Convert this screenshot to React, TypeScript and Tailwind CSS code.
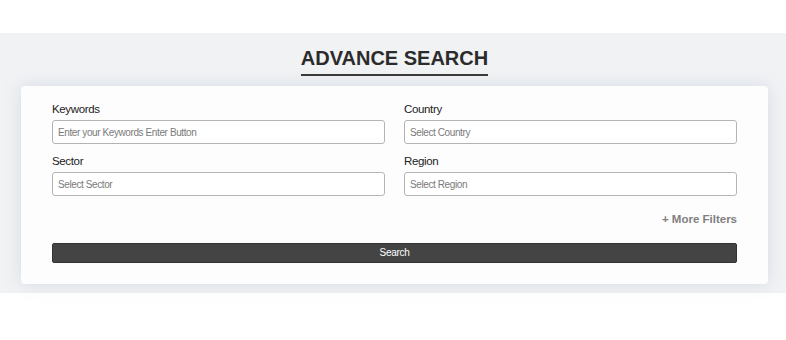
function Field({ label, placeholder }: { label: string; placeholder: string }) {
  return (
    <div>
      <label className="block text-[11.5px] leading-[14px] tracking-[-0.35px] text-[#222] mb-[4px]">
        {label}
      </label>
      <input
        type="text"
        placeholder={placeholder}
        className="block w-full h-[24px] px-[5px] rounded-[3px] border border-[#b4b4b4] bg-white text-[10px] tracking-[-0.4px] text-[#333] placeholder:text-[#7a7a7a] outline-none"
      />
    </div>
  );
}

export default function App() {
  return (
    <div className="bg-white font-['Liberation_Sans',Arial,sans-serif]">
      <div className="h-[33px]" />
      <section className="bg-[#f1f2f4] pt-[13px] pb-[9px]">
        <div className="ml-[21px] w-[747px]">
          {/* Title */}
          <div className="text-center">
            <h1 className="inline-block text-[20px] leading-[24px] font-bold text-[#2b2b2b] pb-[4px] border-b-2 border-[#3a3a3a]">
              ADVANCE SEARCH
            </h1>
          </div>

          {/* Card */}
          <div className="mt-[10px] bg-[#fdfdfd] rounded-[4px] shadow-[0_0_16px_rgba(160,178,200,0.35)] pt-[16px] pb-[21px] px-[31px]">
            <div className="grid grid-cols-2 gap-x-[19px] gap-y-[10px]">
              <Field label="Keywords" placeholder="Enter your Keywords Enter Button" />
              <Field label="Country" placeholder="Select Country" />
              <Field label="Sector" placeholder="Select Sector" />
              <Field label="Region" placeholder="Select Region" />
            </div>

            <div className="mt-[16px] flex justify-end">
              <button className="text-[11.5px] leading-[14px] font-bold text-[#808080]">+ More Filters</button>
            </div>

            <button className="mt-[17px] w-full h-[20px] rounded-[2px] bg-[#444444] border border-[#333] text-white text-[10px] tracking-[-0.3px] leading-[18px]">
              Search
            </button>
          </div>
        </div>
      </section>
      <div className="h-[47px]" />
    </div>
  );
}
